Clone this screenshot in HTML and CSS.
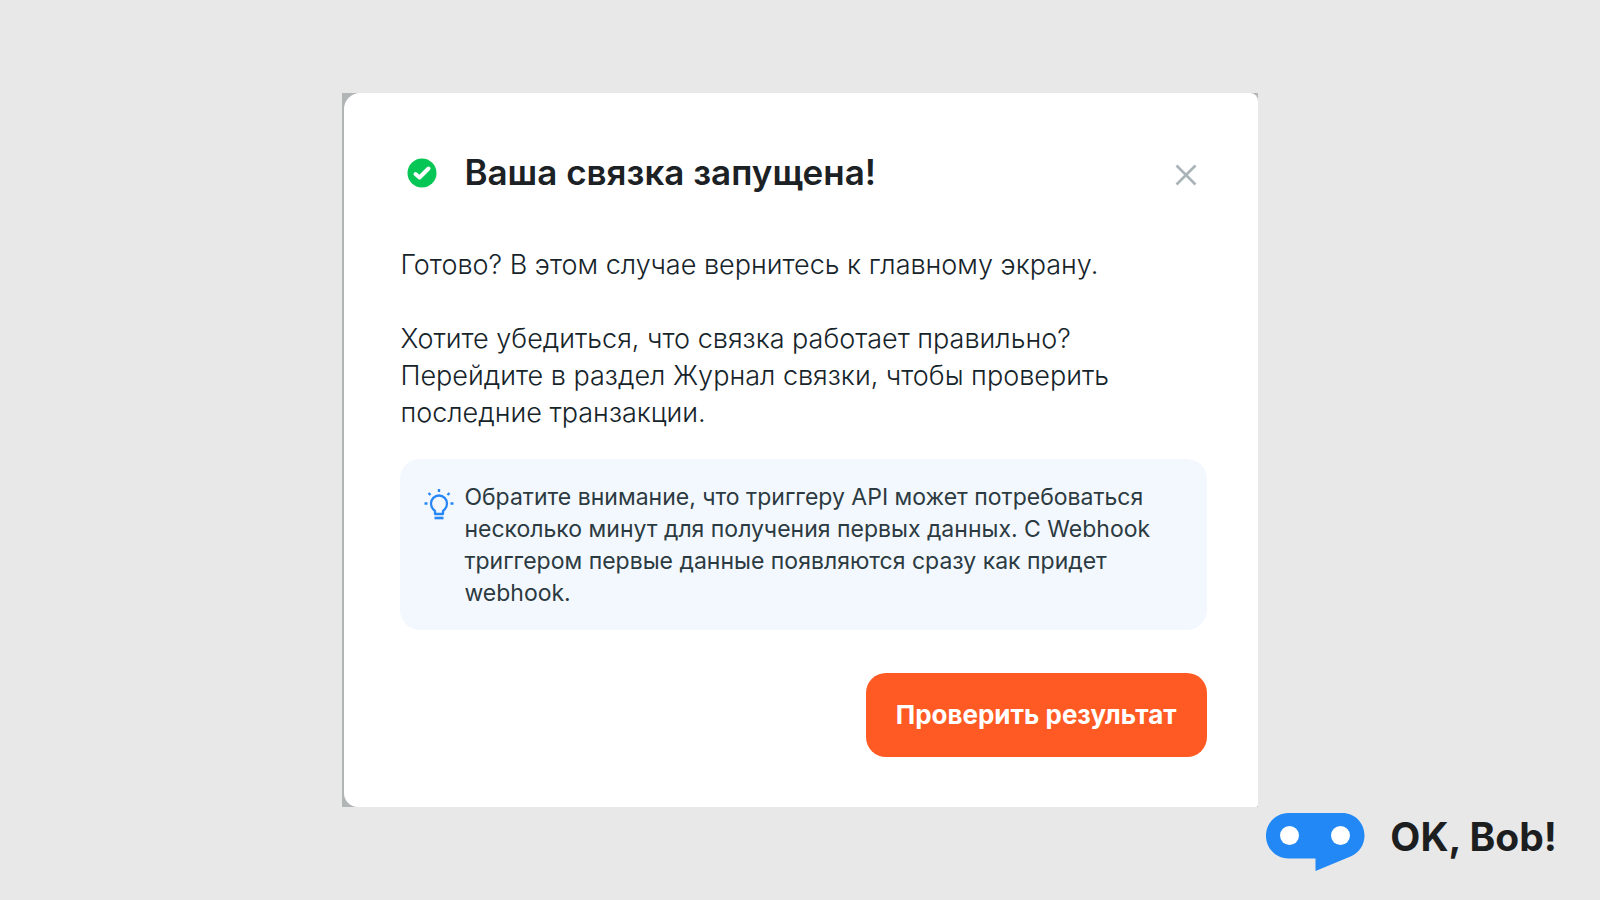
FILE: index.html
```
<!DOCTYPE html>
<html lang="ru">
    <head>
        <meta charset="utf-8">
        <meta name="viewport" content="width=device-width, initial-scale=1">
        <title>OK, Bob!</title>
        <link rel="stylesheet" href="styles.css">
    </head>
    <body>
        <main class="frame">
            <section class="dialog" role="dialog" aria-labelledby="dialogTitle">
                <header class="dialog-header">
                    <svg class="check" viewBox="0 0 30 30" aria-hidden="true">
                        <circle cx="15" cy="15" r="14.5" fill="#06c755"/>
                        <path d="M8.5 16 L12.5 19.5 L21.5 10.5" fill="none" stroke="#fff" stroke-width="4" stroke-linecap="round" stroke-linejoin="round"/>
                    </svg>
                    <h1 class="title" id="dialogTitle">Ваша связка запущена!</h1>
                    <button class="close" type="button" aria-label="Закрыть">
                        <svg viewBox="0 0 22 22" aria-hidden="true">
                            <path d="M1.5 1.5 L20.5 20.5 M20.5 1.5 L1.5 20.5" fill="none" stroke="#a9b3b8" stroke-width="2.6"/>
                        </svg>
                    </button>
                </header>

                <div class="text">
                    <p>Готово? В этом случае вернитесь к главному экрану.</p>
                    <p>Хотите убедиться, что связка работает правильно?<br>Перейдите в раздел Журнал связки, чтобы проверить последние транзакции.</p>
                </div>

                <div class="note">
                    <svg class="bulb" viewBox="0 0 30 32" aria-hidden="true">
                        <path d="M11 26 V23 C8.5 21 7 19 7 15.5 A8 8 0 0 1 23 15.5 C23 19 21.5 21 19 23 V26 Z" fill="none" stroke="#2787f5" stroke-width="2.3" stroke-linejoin="round"/>
                        <path d="M10.5 30 H19.5" stroke="#2787f5" stroke-width="2.6"/>
                        <path d="M15 1 V4 M4.5 5 L6.5 7 M25.5 5 L23.5 7 M0.5 15.5 H3.5 M26.5 15.5 H29.5" stroke="#2787f5" stroke-width="2.4"/>
                    </svg>
                    <p>Обратите внимание, что триггеру API может потребоваться несколько минут для получения первых данных. С Webhook триггером первые данные появляются сразу как придет webhook.</p>
                </div>

                <button class="submit" type="button">Проверить результат</button>
            </section>
        </main>

        <footer class="brand">
            <svg class="brand-logo" viewBox="0 0 99 58" aria-hidden="true">
                <path d="M22.5 0 H76 C89 0 98.5 10 98.5 22.5 C98.5 32 93 40 84.5 43.5 L49.5 58 V45.5 H22.5 C10 45.5 0 35.5 0 22.75 C0 10 10 0 22.5 0 Z" fill="#2188f6"/>
                <circle cx="23.5" cy="22.5" r="9.5" fill="#fff"/>
                <circle cx="74.5" cy="22.5" r="9.5" fill="#fff"/>
            </svg>
            <span class="brand-name">OK, Bob!</span>
        </footer>
    </body>
</html>
```
FILE: styles.css
```
* {
    box-sizing: border-box;
}

body {
    margin: 0;
    min-height: 100vh;
    padding-top: 93px;
    background-color: #e8e8e8;
    color: #16242a;
    font-family: Inter, sans-serif;
}

p, h1 {
    margin: 0;
}

/* dimmed page that shows behind the dialog corners */
.frame {
    width: 57.2%;
    margin: 0 auto;
    padding-left: 2px;
    background-color: #b1b5b5;
}

.dialog {
    display: flex;
    flex-direction: column;
    padding: 57px 51px 50px 56px;
    background-color: #fff;
    border-radius: 16px 8px 2px 14px;
}

.dialog-header {
    display: flex;
    align-items: center;
    padding: 0 10px 0 7px;
}

.check {
    width: 30px;
    height: 30px;
    margin-top: 2px;
    flex: none;
}

.title {
    flex: 1;
    margin-left: 27px;
    font-size: 35px;
    line-height: 44px;
    font-weight: 600;
    color: #1b2124;
}

.close {
    padding: 0;
    margin-top: 6px;
    border: 0;
    background: none;
    cursor: pointer;
}

.close svg {
    display: block;
    width: 22px;
    height: 22px;
}

.text {
    display: grid;
    gap: 37px;
    margin-top: 52px;
    font-size: 27px;
    line-height: 37px;
    font-weight: 300;
}

.note {
    display: flex;
    align-items: flex-start;
    gap: 10px;
    margin-top: 28px;
    padding: 22px 48px 21px 24px;
    border-radius: 20px;
    background-color: #f3f8ff;
    color: #2c3b41;
    font-size: 23px;
    line-height: 32px;
}

.bulb {
    width: 30px;
    height: 32px;
    margin-top: 7px;
    flex: none;
}

.submit {
    align-self: flex-end;
    margin-top: 43px;
    padding: 24px 30px;
    border: 0;
    border-radius: 20px;
    background-color: #ff5a23;
    color: #fff;
    font-family: inherit;
    font-size: 26px;
    line-height: 36px;
    font-weight: 700;
    cursor: pointer;
}

.brand {
    display: flex;
    justify-content: flex-end;
    gap: 25px;
    padding: 6px 43px 0 0;
}

.brand-logo {
    width: 99px;
    height: 58px;
}

.brand-name {
    font-size: 39px;
    line-height: 48px;
    font-weight: 700;
    color: #1c1e1f;
}
```
